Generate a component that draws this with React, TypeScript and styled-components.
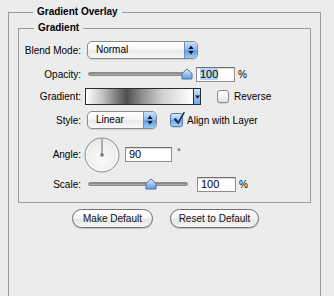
import React from 'react';
import styled, { createGlobalStyle } from 'styled-components';

const GlobalStyle = createGlobalStyle`
  html, body {
    margin: 0;
    padding: 0;
    background: #ececec;
    overflow: hidden;
  }
  body {
    font-family: "Liberation Sans", Arial, sans-serif;
    font-size: 10px;
    color: #000;
  }
`;

const Page = styled.div`
  width: 334px;
  height: 296px;
  padding: 6px 0 0 8px;
  box-sizing: border-box;
  overflow: hidden;
`;

// the outer group runs off the bottom of the panel, so it has no bottom edge
const Group = styled.fieldset<{ $outer?: boolean }>`
  margin: ${p => (p.$outer ? '0' : '4px 0 0 0')};
  padding: ${p => (p.$outer ? '0 9px' : '0')};
  width: ${p => (p.$outer ? '313px' : '293px')};
  height: ${p => (p.$outer ? '290px' : 'auto')};
  box-sizing: border-box;
  border: 1px solid #9b9b9b;
  border-bottom-width: ${p => (p.$outer ? 0 : 1)}px;
  min-inline-size: 0;
`;

const Legend = styled.legend`
  margin-left: 15px;
  padding: 0 4px;
  font-weight: bold;
  font-size: 10px;
  line-height: 12px;
`;

const Form = styled.div`
  display: flex;
  flex-direction: column;
  padding: 7px 0 10px 0;
`;

const Row = styled.div<{ $mt?: number; $h: number }>`
  display: flex;
  align-items: center;
  height: ${p => p.$h}px;
  margin-top: ${p => p.$mt ?? 0}px;
`;

const Label = styled.div`
  width: 62px;
  text-align: right;
  padding-right: 6px;
  flex-shrink: 0;
`;

const Popup = styled.div<{ $w: number }>`
  display: flex;
  width: ${p => p.$w}px;
  height: 18px;
  box-sizing: border-box;
  border: 1px solid #8a8a8a;
  border-radius: 5px;
  overflow: hidden;
  background: linear-gradient(#ffffff 0%, #f7f7f7 45%, #e9e9e9 55%, #f8f8f8 100%);
  box-shadow: 0 1px 1px rgba(0, 0, 0, 0.12);
`;

const PopupText = styled.div`
  flex: 1;
  padding-left: 8px;
  line-height: 16px;
`;

const PopupArrows = styled.div`
  width: 12px;
  display: flex;
  align-items: center;
  justify-content: center;
  border-left: 1px solid #6b8fc2;
  background: linear-gradient(#c9e0fa 0%, #8ebdf0 45%, #5c9de6 55%, #9ccaf6 100%);
`;

const SliderBox = styled.div<{ $w: number }>`
  position: relative;
  width: ${p => p.$w}px;
  height: 15px;
  margin-left: 1px;
  flex-shrink: 0;
`;

const Track = styled.div<{ $w: number }>`
  position: absolute;
  left: 0;
  top: 5px;
  width: ${p => p.$w}px;
  height: 4px;
  border-radius: 2px;
  background: linear-gradient(#7d7d7d, #b9b9b9);
  border: 1px solid #8b8b8b;
  box-sizing: border-box;
`;

const Thumb = styled.svg`
  position: absolute;
  top: 1px;
`;

const Field = styled.div<{ $w: number; $ml: number }>`
  width: ${p => p.$w}px;
  height: 15px;
  margin-left: ${p => p.$ml}px;
  box-sizing: border-box;
  border: 1px solid #8e8e8e;
  border-top-color: #6e6e6e;
  background: #fff;
  box-shadow: inset 0 1px 1px rgba(0, 0, 0, 0.15);
  padding-left: 3px;
  line-height: 13px;
  font-size: 11px;
  flex-shrink: 0;
`;

const Selected = styled.span`
  background: #b5d5ff;
`;

const Unit = styled.div<{ $ml: number; $up?: boolean }>`
  margin-left: ${p => p.$ml}px;
  align-self: ${p => (p.$up ? 'flex-start' : 'center')};
  margin-top: ${p => (p.$up ? '10px' : '0')};
  font-size: ${p => (p.$up ? '9px' : '10px')};
`;

const GradientPicker = styled.div`
  display: flex;
  width: 116px;
  height: 17px;
  margin-left: -2px;
  box-sizing: border-box;
  border: 1px solid #2a2a2a;
`;

const GradientSwatch = styled.div`
  flex: 1;
  background: linear-gradient(
    to right,
    #ffffff 0%,
    #c4c4c4 15%,
    #6c6c6c 32%,
    #4f4f4f 38%,
    #8d8d8d 52%,
    #d2d2d2 72%,
    #ffffff 100%
  );
`;

const GradientArrow = styled.div`
  width: 6px;
  display: flex;
  align-items: center;
  justify-content: center;
  border-left: 1px solid #2a2a2a;
  background: linear-gradient(#cfe3fb, #6ea9ea);
`;

const Check = styled.div<{ $on?: boolean; $ml: number }>`
  position: relative;
  width: ${p => (p.$on ? 13 : 12)}px;
  height: ${p => (p.$on ? 14 : 13)}px;
  margin-left: ${p => p.$ml}px;
  box-sizing: border-box;
  border: 1px solid ${p => (p.$on ? '#5a79a8' : '#8a8a8a')};
  border-radius: 3px;
  background: ${p =>
    p.$on
      ? 'linear-gradient(#d5e8fc 0%, #9cc8f3 45%, #6aa8ec 55%, #a9d2f8 100%)'
      : 'linear-gradient(#ffffff 0%, #f4f4f4 50%, #e4e4e4 100%)'};
  box-shadow: 0 1px 1px rgba(0, 0, 0, 0.12);
  flex-shrink: 0;
`;

const CheckMark = styled.svg`
  position: absolute;
  left: 1px;
  top: -3px;
`;

const CheckText = styled.div<{ $ml: number }>`
  margin-left: ${p => p.$ml}px;
`;

const Dial = styled.svg`
  margin-left: -3px;
  flex-shrink: 0;
`;

const Buttons = styled.div`
  display: flex;
  gap: 17px;
  margin-top: 6px;
  padding-left: 54px;
`;

const PillButton = styled.div<{ $w: number }>`
  width: ${p => p.$w}px;
  height: 19px;
  box-sizing: border-box;
  border: 1px solid #6f6f6f;
  border-radius: 10px;
  background: linear-gradient(#ffffff 0%, #f6f6f6 45%, #e6e6e6 55%, #f4f4f4 100%);
  box-shadow: 0 1px 1px rgba(0, 0, 0, 0.18);
  text-align: center;
  line-height: 17px;
  color: #111;
`;

const UpDown = () => (
  <svg width="6" height="10" viewBox="0 0 6 10">
    <path d="M3 0.5 L5.6 4 L0.4 4 Z" fill="#111" />
    <path d="M3 9.5 L5.6 6 L0.4 6 Z" fill="#111" />
  </svg>
);

const ThumbIcon = ({ left }: { left: number }) => (
  <Thumb width="12" height="12" viewBox="0 0 12 12" style={{ left }}>
    <defs>
      <linearGradient id="tg" x1="0" y1="0" x2="0" y2="1">
        <stop offset="0" stopColor="#e4f0fd" />
        <stop offset="0.5" stopColor="#9cc6f2" />
        <stop offset="1" stopColor="#5d9be3" />
      </linearGradient>
    </defs>
    <path d="M1 5.5 L6 1 L11 5.5 L11 11 L1 11 Z" fill="url(#tg)" stroke="#4f6f9f" strokeWidth="1" />
  </Thumb>
);

const Slider = ({ pct, width }: { pct: number; width: number }) => (
  <SliderBox $w={width + 5}>
    <Track $w={width} />
    <ThumbIcon left={Math.round((width - 2) * pct) - 5} />
  </SliderBox>
);

export default function App() {
  return (
    <Page>
      <GlobalStyle />
      <Group $outer>
        <Legend>Gradient Overlay</Legend>
        <Group>
          <Legend>Gradient</Legend>
          <Form>
            <Row $h={18}>
              <Label>Blend Mode:</Label>
              <Popup $w={111}>
                <PopupText>Normal</PopupText>
                <PopupArrows>
                  <UpDown />
                </PopupArrows>
              </Popup>
            </Row>
            <Row $h={15} $mt={8}>
              <Label>Opacity:</Label>
              <Slider pct={1} width={100} />
              <Field $w={39} $ml={3}>
                <Selected>100</Selected>
              </Field>
              <Unit $ml={3}>%</Unit>
            </Row>
            <Row $h={17} $mt={6}>
              <Label>Gradient:</Label>
              <GradientPicker>
                <GradientSwatch />
                <GradientArrow>
                  <svg width="5" height="4" viewBox="0 0 5 4">
                    <path d="M0 0.5 L5 0.5 L2.5 3.8 Z" fill="#111" />
                  </svg>
                </GradientArrow>
              </GradientPicker>
              <Check $ml={16} />
              <CheckText $ml={5}>Reverse</CheckText>
            </Row>
            <Row $h={18} $mt={6}>
              <Label>Style:</Label>
              <Popup $w={70}>
                <PopupText>Linear</PopupText>
                <PopupArrows>
                  <UpDown />
                </PopupArrows>
              </Popup>
              <Check $on $ml={13}>
                <CheckMark width="14" height="15" viewBox="0 0 14 15">
                  <path
                    d="M1.5 8 L4 7 L6 10.5 L11.5 1 L13 1.5 L6.2 13.5 Z"
                    fill="#1b2a48"
                  />
                </CheckMark>
              </Check>
              <CheckText $ml={4}>Align with Layer</CheckText>
            </Row>
            <Row $h={35} $mt={8}>
              <Label>Angle:</Label>
              <Dial width="36" height="36" viewBox="0 0 36 36">
                <defs>
                  <radialGradient id="dg" cx="0.5" cy="0.6" r="0.6">
                    <stop offset="0" stopColor="#fbfbfb" />
                    <stop offset="0.8" stopColor="#ececec" />
                    <stop offset="1" stopColor="#d6d6d6" />
                  </radialGradient>
                </defs>
                <circle cx="18" cy="18" r="17" fill="url(#dg)" stroke="#8f8f8f" strokeWidth="1" />
                <circle cx="18" cy="18" r="15.5" fill="none" stroke="#ffffff" strokeWidth="1" opacity="0.7" />
                <line x1="18" y1="18" x2="18" y2="2" stroke="#6a6a6a" strokeWidth="1" />
                <rect x="16.5" y="16.5" width="3" height="3" fill="#6a6a6a" />
              </Dial>
              <Field $w={47} $ml={5}>90</Field>
              <Unit $ml={5} $up>°</Unit>
            </Row>
            <Row $h={15} $mt={5}>
              <Label>Scale:</Label>
              <Slider pct={0.63} width={100} />
              <Field $w={39} $ml={4}>100</Field>
              <Unit $ml={3}>%</Unit>
            </Row>
          </Form>
        </Group>
        <Buttons>
          <PillButton $w={81}>Make Default</PillButton>
          <PillButton $w={89}>Reset to Default</PillButton>
        </Buttons>
      </Group>
    </Page>
  );
}
